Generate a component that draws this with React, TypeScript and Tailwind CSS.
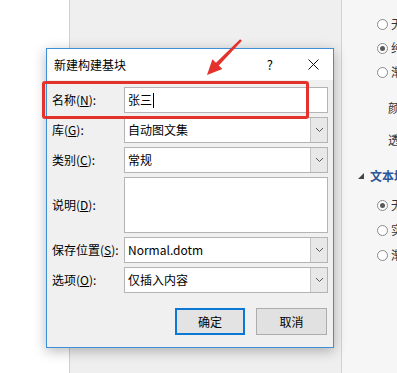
import React from 'react';

function Chevron() {
  return (
    <svg width="9" height="6" viewBox="0 0 9 6" className="text-[#555]">
      <path d="M1 1 L4.5 4.5 L8 1" fill="none" stroke="currentColor" strokeWidth="1" />
    </svg>
  );
}

function Combo({ value }: { value: string }) {
  return (
    <div className="flex h-[26px] border border-[#b4b4b4] bg-white">
      <div className="flex-1 flex items-center pl-[3px] text-[12px] leading-none text-black">{value}</div>
      <div className="w-[17px] flex items-center justify-center bg-[#e8e8e8] border-l border-[#c4c4c4]">
        <Chevron />
      </div>
    </div>
  );
}

function Label({ text, k }: { text: string; k: string }) {
  return (
    <div className="text-[12px] leading-none text-black">
      {text}(<span className="underline">{k}</span>):
    </div>
  );
}

function Radio({ checked, label }: { checked?: boolean; label: string }) {
  return (
    <div className="flex items-center gap-[3px] h-[24px] whitespace-nowrap">
      <span className="w-[11px] h-[11px] rounded-full border border-[#8a8a8a] bg-white flex items-center justify-center shrink-0">
        {checked && <span className="w-[5px] h-[5px] rounded-full bg-[#5a5a5a]" />}
      </span>
      <span className="text-[12px] leading-none text-[#333]">{label}</span>
    </div>
  );
}

export default function App() {
  return (
    <div className="relative w-[397px] h-[373px] overflow-hidden font-['Microsoft_YaHei','Noto_Sans_CJK_SC',sans-serif] flex">
      <div className="w-[70px] bg-white border-r border-[#d0d0d0]" />
      <div className="w-[272px] bg-[#efefef] border-r border-[#d2d2d2]" />
      <div className="flex-1 bg-[#f6f6f6] overflow-hidden">
        <div className="flex flex-col pt-[12px] pl-[35px]">
          <Radio label="无填充(N)" />
          <Radio checked label="纯色填充(S)" />
          <Radio label="渐变填充(G)" />
          <div className="mt-[12px] h-[24px] flex items-center pl-[11px] text-[12px] text-[#333] whitespace-nowrap">颜色(C)</div>
          <div className="mt-[8px] h-[24px] flex items-center pl-[11px] text-[12px] text-[#333] whitespace-nowrap">透明度(T)</div>
        </div>
        <div className="mt-[12px] h-[24px] flex items-center pl-[16px] gap-[6px] whitespace-nowrap">
          <span className="w-0 h-0 border-l-[6px] border-l-transparent border-b-[6px] border-b-[#444]" />
          <span className="text-[12px] font-bold text-[#2b579a]">文本填充</span>
        </div>
        <div className="flex flex-col mt-[5px] pl-[35px]">
          <Radio checked label="无填充(N)" />
          <div className="h-[1px]" />
          <Radio label="实心填充(S)" />
          <div className="h-[1px]" />
          <Radio label="渐变填充(G)" />
        </div>
      </div>

      {/* dialog window */}
      <div className="absolute left-[46px] top-[48px] w-[288px] h-[300px] border border-[#3c8fd9] bg-[#f0f0f0] shadow-[0_3px_12px_rgba(0,0,0,0.28)] flex flex-col">
        <div className="h-[31px] bg-white flex items-center pl-[7px] pr-[14px] shrink-0">
          <span className="text-[12px] leading-none text-black flex-1">新建构建基块</span>
          <span className="text-[13px] leading-none text-black mr-[35px]">?</span>
          <svg width="11" height="11" viewBox="0 0 11 11">
            <path d="M0.5 0.5 L10.5 10.5 M10.5 0.5 L0.5 10.5" stroke="#111" strokeWidth="1" />
          </svg>
        </div>
        <div className="flex-1 pt-[7px] pl-[5px] pr-[5px] flex flex-col">
          <div className="grid grid-cols-[72px_1fr] gap-y-[4px] items-center">
            <Label text="名称" k="N" />
            <div className="h-[26px] border border-[#b4b4b4] bg-white flex items-center pl-[3px]">
              <span className="text-[12px] leading-none text-black">张三</span>
              <span className="w-[1px] h-[15px] bg-black ml-[1px]" />
            </div>
            <Label text="库" k="G" />
            <Combo value="自动图文集" />
            <Label text="类别" k="C" />
            <Combo value="常规" />
            <Label text="说明" k="D" />
            <div className="h-[56px] border border-[#b4b4b4] bg-white" />
            <Label text="保存位置" k="S" />
            <Combo value="Normal.dotm" />
            <Label text="选项" k="O" />
            <Combo value="仅插入内容" />
          </div>
          <div className="flex justify-end gap-[11px] mt-[15px] pr-[1px]">
            <button className="w-[70px] h-[27px] border-2 border-[#0a78d4] bg-[#e3e3e3] text-[12px] leading-none text-black">确定</button>
            <button className="w-[71px] h-[27px] border border-[#adadad] bg-[#e1e1e1] text-[12px] leading-none text-black">取消</button>
          </div>
        </div>
      </div>

      {/* annotation: red box */}
      <div className="absolute left-[42px] top-[81px] w-[267px] h-[38px] border-[3px] border-[#e3322b] rounded-[3px]" />

      {/* annotation: red arrow */}
      <svg className="absolute left-0 top-0" width="397" height="373" viewBox="0 0 397 373">
        <polygon
          points="207,75 222.4,69.1 218.8,65.6 241.9,40.8 240.1,39.2 216,62.8 212.4,59.3"
          fill="#e3322b"
        />
      </svg>
    </div>
  );
}
